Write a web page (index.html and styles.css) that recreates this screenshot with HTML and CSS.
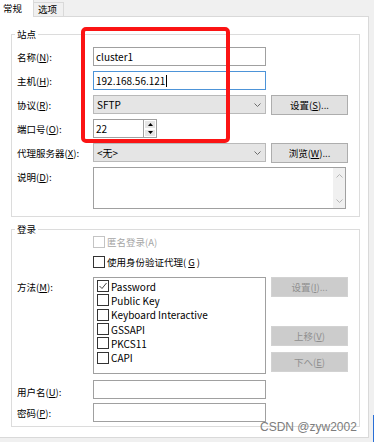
FILE: index.html
```html
<!DOCTYPE html>
<html lang="zh-CN">
<head>
    <meta charset="UTF-8">
    <meta name="viewport" content="width=device-width, initial-scale=1.0">
    <title>会话设置</title>
    <link rel="stylesheet" href="styles.css">
</head>
<body>
    <div class="tabs">
        <div class="tab active">常规</div>
        <div class="tab">选项</div>
    </div>

    <div class="panel">
        <fieldset class="group site">
            <legend>站点</legend>
            <div class="form site-form">
                <label>名称(<u>N</u>):</label>
                <div class="input">cluster1</div>

                <label>主机(<u>H</u>):</label>
                <div class="input focus">192.168.56.121<span class="caret"></span></div>

                <label>协议(<u>R</u>):</label>
                <div class="select">SFTP
                    <svg class="chev" width="7" height="4" viewBox="0 0 7 4"><polyline points="0.5,0.5 3.5,3.5 6.5,0.5" fill="none" stroke="#6d6d6d" stroke-width="1"/></svg>
                </div>
                <button class="btn">设置(<u>S</u>)...</button>

                <label>端口号(<u>O</u>):</label>
                <div class="port">
                    <div class="input">22</div>
                    <div class="spin">
                        <div class="spin-btn"><svg width="5" height="3" viewBox="0 0 5 3"><polygon points="2.5,0 5,3 0,3" fill="#000"/></svg></div>
                        <div class="spin-btn"><svg width="5" height="3" viewBox="0 0 5 3"><polygon points="0,0 5,0 2.5,3" fill="#000"/></svg></div>
                    </div>
                </div>

                <label>代理服务器(<u>X</u>):</label>
                <div class="select">&lt;无&gt;
                    <svg class="chev" width="7" height="4" viewBox="0 0 7 4"><polyline points="0.5,0.5 3.5,3.5 6.5,0.5" fill="none" stroke="#6d6d6d" stroke-width="1"/></svg>
                </div>
                <button class="btn">浏览(<u>W</u>)...</button>

                <label class="top">说明(<u>D</u>):</label>
                <div class="memo">
                    <div class="scroll">
                        <svg width="7" height="4" viewBox="0 0 7 4"><polyline points="0.5,3.5 3.5,0.5 6.5,3.5" fill="none" stroke="#b4b4b4" stroke-width="1"/></svg>
                        <svg width="7" height="4" viewBox="0 0 7 4"><polyline points="0.5,0.5 3.5,3.5 6.5,0.5" fill="none" stroke="#b4b4b4" stroke-width="1"/></svg>
                    </div>
                </div>
            </div>
        </fieldset>

        <fieldset class="group login">
            <legend>登录</legend>
            <div class="form login-form">
                <div class="check disabled"><span class="box"></span>匿名登录(A)</div>
                <div class="check"><span class="box"></span>使用身份验证代理(<u>G</u>)</div>

                <label class="top">方法(<u>M</u>):</label>
                <div class="listbox">
                    <div class="item"><span class="box"><svg width="10" height="10" viewBox="0 0 10 10"><polyline points="1.5,5 4,7.5 8.5,2" fill="none" stroke="#444" stroke-width="1"/></svg></span>Password</div>
                    <div class="item"><span class="box"></span>Public Key</div>
                    <div class="item"><span class="box"></span>Keyboard Interactive</div>
                    <div class="item"><span class="box"></span>GSSAPI</div>
                    <div class="item"><span class="box"></span>PKCS11</div>
                    <div class="item"><span class="box"></span>CAPI</div>
                </div>
                <div class="side-buttons">
                    <button class="btn" disabled>设置(<u>I</u>)...</button>
                    <button class="btn move-up" disabled>上移(<u>V</u>)</button>
                    <button class="btn" disabled>下へ(<u>E</u>)</button>
                </div>

                <label>用户名(<u>U</u>):</label>
                <div class="input"></div>

                <label>密码(<u>P</u>):</label>
                <div class="input"></div>
            </div>
        </fieldset>
    </div>

    <div class="highlight"></div>
    <div class="watermark">CSDN @zyw2002</div>
    <div class="edge"></div>
</body>
</html>
```

FILE: styles.css
```css
body {
    margin: 0;
    width: 374px;
    height: 442px;
    overflow: hidden;
    position: relative;
    background: #f0f0f0;
    font-family: "Noto Sans CJK SC", sans-serif;
    font-size: 9.5px;
    color: #000;
}

u {
    text-decoration: underline;
    text-underline-offset: 1px;
}

/* tab strip */
.tabs {
    display: flex;
    align-items: flex-end;
    height: 16px;
}

.tab {
    box-sizing: border-box;
    width: 30px;
    height: 14px;
    padding-left: 4px;
    line-height: 13px;
    border-top: 1px solid #d9d9d9;
    border-right: 1px solid #d9d9d9;
    background: #f0f0f0;
}

.tab.active {
    width: 34px;
    height: 17px;
    margin-bottom: -1px;
    padding-left: 3px;
    line-height: 17px;
    border-top: none;
    background: #fff;
    position: relative;
    z-index: 1;
}

/* white page */
.panel {
    box-sizing: border-box;
    width: 369px;
    height: 422px;
    padding: 10px 0 0 11px;
    background: #fff;
    border: 1px solid #d9d9d9;
    border-left: none;
}

.group {
    box-sizing: border-box;
    width: 349px;
    margin: 0;
    padding: 6px 0 7px 5px;
    border: 1px solid #dcdcdc;
}

.group legend {
    padding: 0 2px;
    margin-left: -2px;
    line-height: 14px;
}

.login {
    margin-top: 5px;
    padding-top: 0;
    padding-bottom: 4px;
}

.form {
    display: grid;
    grid-template-columns: 71px 173px 77px;
    column-gap: 5px;
}

.form label {
    grid-column: 1;
    align-self: center;
    white-space: nowrap;
}

.form label.top {
    align-self: start;
    padding-top: 3px;
    line-height: 14px;
}

.site-form {
    grid-template-rows: repeat(5, 19px) 42px;
    row-gap: 5px;
}

.site-form .memo {
    grid-column: 2 / 4;
    height: 42px;
    margin-right: 2px;
}

.login-form {
    grid-template-rows: 20px 21px 103px 23px 19px;
}

.login-form .check {
    grid-column: 2;
}

/* fields */
.input,
.select,
.memo {
    box-sizing: border-box;
    height: 19px;
    border: 1px solid #a0a0a0;
    background: #fff;
    padding-left: 2px;
    font-size: 10px;
    line-height: 17px;
    align-self: start;
}

.input.focus {
    border-color: #4d94d8;
}

.caret {
    display: inline-block;
    width: 1px;
    height: 12px;
    margin-left: 1px;
    vertical-align: -2px;
    background: #000;
}

.select {
    display: flex;
    justify-content: space-between;
    align-items: center;
    background: #e5e5e5;
    border-color: #b9b9b9;
    padding: 0 4px 0 3px;
    line-height: 17px;
}

.port {
    display: flex;
}

.port .input {
    width: 51px;
}

.spin {
    display: flex;
    flex-direction: column;
    width: 13px;
    height: 19px;
    box-sizing: border-box;
    border: 1px solid #a0a0a0;
    border-left: none;
}

.spin-btn {
    flex: 1;
    display: flex;
    align-items: center;
    justify-content: center;
    background: #e6e6e6;
    border: 1px solid #fff;
}

.memo {
    display: flex;
    justify-content: flex-end;
    padding: 0;
}

.scroll {
    width: 12px;
    display: flex;
    flex-direction: column;
    justify-content: space-between;
    align-items: center;
    padding: 6px 0 5px;
    background: #f0f0f0;
}

.btn {
    box-sizing: border-box;
    height: 20px;
    width: 77px;
    padding: 0;
    font-family: inherit;
    font-size: 9.5px;
    color: #000;
    background: #e1e1e1;
    border: 1px solid #adadad;
    align-self: start;
}

.btn:disabled {
    background: #cccccc;
    border-color: #d2d2d2;
    color: #8f8f8f;
}

.side-buttons {
    display: flex;
    flex-direction: column;
    gap: 6px;
}

.side-buttons .move-up {
    margin-top: 23px;
}

/* checkboxes */
.box {
    box-sizing: border-box;
    width: 12px;
    height: 12px;
    border: 1px solid #333;
    background: #fff;
    display: inline-flex;
    align-items: center;
    justify-content: center;
    flex: none;
}

.check {
    display: flex;
    align-items: center;
    gap: 2px;
    height: 12px;
    line-height: 12px;
}

.check.disabled {
    color: #a6a6a6;
}

.check.disabled .box {
    border-color: #c4c4c4;
}

.listbox {
    box-sizing: border-box;
    height: 97px;
    border: 1px solid #a0a0a0;
    padding: 1px 0 0 3px;
    font-size: 10px;
}

.item {
    display: flex;
    align-items: center;
    gap: 2px;
    height: 14.3px;
}

/* overlays on the screenshot */
.highlight {
    position: absolute;
    left: 81px;
    top: 27px;
    width: 149px;
    height: 116px;
    box-sizing: border-box;
    border: 4px solid #fb1414;
    border-radius: 5px;
}

.watermark {
    position: absolute;
    left: 260px;
    top: 420px;
    font-family: "Liberation Sans", sans-serif;
    font-size: 12px;
    color: #7d7d7d;
}

.edge {
    position: absolute;
    right: 0;
    top: 415px;
    width: 1px;
    height: 27px;
    background: #2a6fd6;
}
```
